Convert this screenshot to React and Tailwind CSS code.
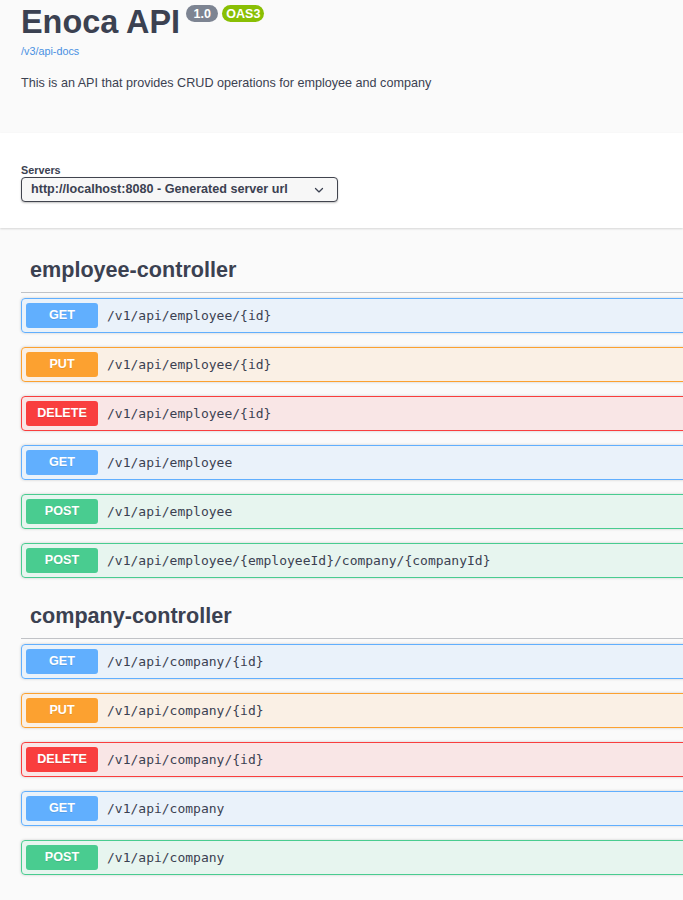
import React from 'react';

// ── Method colours ────────────────────────────────────────────────────────────

const METHOD_STYLES = {
  GET:    { block: 'border-[#61affe] bg-[#61affe]/10', badge: 'bg-[#61affe]' },
  PUT:    { block: 'border-[#fca130] bg-[#fca130]/10', badge: 'bg-[#fca130]' },
  DELETE: { block: 'border-[#f93e3e] bg-[#f93e3e]/10', badge: 'bg-[#f93e3e]' },
  POST:   { block: 'border-[#49cc90] bg-[#49cc90]/10', badge: 'bg-[#49cc90]' },
};

// ── Controllers data ──────────────────────────────────────────────────────────

const CONTROLLERS = [
  {
    name: 'employee-controller',
    ops: [
      { method: 'GET',    path: '/v1/api/employee/{id}' },
      { method: 'PUT',    path: '/v1/api/employee/{id}' },
      { method: 'DELETE', path: '/v1/api/employee/{id}' },
      { method: 'GET',    path: '/v1/api/employee' },
      { method: 'POST',   path: '/v1/api/employee' },
      { method: 'POST',   path: '/v1/api/employee/{employeeId}/company/{companyId}' },
    ],
  },
  {
    name: 'company-controller',
    ops: [
      { method: 'GET',    path: '/v1/api/company/{id}' },
      { method: 'PUT',    path: '/v1/api/company/{id}' },
      { method: 'DELETE', path: '/v1/api/company/{id}' },
      { method: 'GET',    path: '/v1/api/company' },
      { method: 'POST',   path: '/v1/api/company' },
    ],
  },
];

// ── Info ─────────────────────────────────────────────────────────────────────

function Info() {
  return (
    <div className="h-[133px] px-[21px]">
      <div className="flex items-start pt-[4px]">
        <h1 className="text-[32.4px] font-bold leading-[37px]">Enoca API</h1>
        <div className="ml-[6px] mt-[1px] flex gap-[4px]">
          <span className="whitespace-pre rounded-full bg-[#7d8492] px-[4px] py-[1.5px] text-[12.5px] font-bold leading-[14px] text-white">
            {' 1.0 '}
          </span>
          <span className="rounded-full bg-[#89bf04] px-[4px] py-[1.5px] text-[12.5px] font-bold leading-[14px] text-white">
            OAS3
          </span>
        </div>
      </div>
      <a href="#" className="mt-[4px] block text-[10.8px] leading-[13px] text-[#4990e2]">
        /v3/api-docs
      </a>
      <p className="mt-[16px] text-[12.6px] leading-[18px]">
        This is an API that provides CRUD operations for employee and company
      </p>
    </div>
  );
}

// ── Servers ──────────────────────────────────────────────────────────────────

function Servers() {
  return (
    <div className="h-[95px] bg-white px-[21px] pt-[31px] shadow-[0_1px_2px_0_rgba(0,0,0,0.15)]">
      <label className="block text-[10.8px] font-bold leading-[13px]">Servers</label>
      <div className="flex h-[25px] w-[317px] items-center justify-between rounded-[4px] border border-[#41444e] bg-[#f7f7f7] pl-[9px] pr-[9px] shadow-[0_1px_2px_0_rgba(0,0,0,0.25)]">
        <span className="text-[12.6px] font-bold">http://localhost:8080 - Generated server url</span>
        <svg width="18" height="18" viewBox="0 0 20 20" className="fill-[#3b4151]">
          <path d="M13.418 7.859a.695.695 0 01.978 0 .68.68 0 010 .969l-3.908 3.83a.697.697 0 01-.979 0l-3.908-3.83a.68.68 0 010-.969.695.695 0 01.978 0L10 11l3.418-3.141z" />
        </svg>
      </div>
    </div>
  );
}

// ── Operation row ────────────────────────────────────────────────────────────

function Operation({ method, path }) {
  const s = METHOD_STYLES[method];
  return (
    <div className={`flex h-[35px] items-center rounded-[4px] border pl-[4px] shadow-[0_0_3px_rgba(0,0,0,0.19)] ${s.block}`}>
      <span className={`h-[25px] w-[72px] rounded-[3px] text-center text-[12.6px] font-bold leading-[25px] text-white [text-shadow:0_1px_0_rgba(0,0,0,0.1)] ${s.badge}`}>
        {method}
      </span>
      <span className="ml-[9px] font-['DejaVu_Sans_Mono',monospace] text-[13px]">
        {path}
      </span>
    </div>
  );
}

function Controller({ name, ops, className }) {
  return (
    <section className={className}>
      <h3 className="mb-[5px] border-b border-[rgba(59,65,81,0.3)] pb-[10px] pl-[9px] pt-[9px] text-[21.6px] font-bold leading-[25px]">
        {name}
      </h3>
      <div className="flex flex-col gap-[14px]">
        {ops.map((op, i) => (
          <Operation key={i} {...op} />
        ))}
      </div>
    </section>
  );
}

// ── Page ─────────────────────────────────────────────────────────────────────

export default function App() {
  return (
    <div className="min-h-screen overflow-hidden bg-[#fafafa] font-['Liberation_Sans',Arial,sans-serif] text-[#3b4151]">
      <Info />
      <Servers />
      <div className="-mr-[40px] pl-[21px] pb-[10px]">
        <Controller {...CONTROLLERS[0]} className="mt-[20px]" />
        <Controller {...CONTROLLERS[1]} className="mt-[16px]" />
      </div>
    </div>
  );
}
